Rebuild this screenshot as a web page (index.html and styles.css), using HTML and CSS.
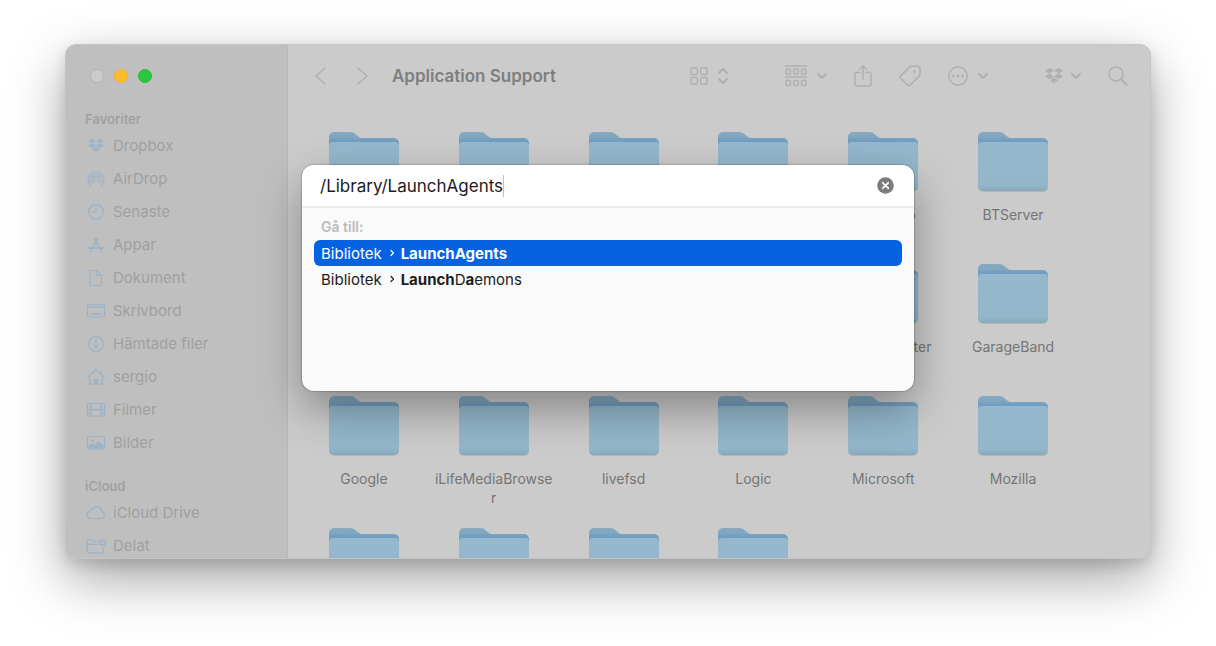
FILE: index.html
```html
<!DOCTYPE html>
<html lang="sv">
<head>
<meta charset="utf-8">
<title>Application Support</title>
<link rel="stylesheet" href="styles.css">
</head>
<body>
<svg class="sprite" aria-hidden="true">
  <defs>
    <linearGradient id="front" x1="0" y1="0" x2="0" y2="1">
      <stop offset="0" stop-color="#95b8cd"/><stop offset=".88" stop-color="#94b6ca"/><stop offset="1" stop-color="#87a9bb"/>
    </linearGradient>
    <linearGradient id="back" x1="0" y1="0" x2="0" y2="1">
      <stop offset="0" stop-color="#85aac1"/><stop offset=".1" stop-color="#80a6c0"/><stop offset=".15" stop-color="#729ec1"/><stop offset="1" stop-color="#729ec1"/>
    </linearGradient>
    <symbol id="folder" viewBox="0 0 70 60">
      <path d="M0 5a5 5 0 0 1 5-5h16c2.500 0 4 .8 5.500 2.200l2.500 2C30.500 5.500 31.500 6 34 6h31a5 5 0 0 1 5 5v43H0z" fill="url(#back)"/>
      <path d="M0 15v40a5 5 0 0 0 5 5h60a5 5 0 0 0 5-5V15z" fill="#b2b7ba"/>
      <path d="M0 14a4 4 0 0 1 4-4h62a4 4 0 0 1 4 4v40a5 5 0 0 1-5 5H5a5 5 0 0 1-5-5z" fill="url(#front)"/>
    </symbol>
    <symbol id="dropbox" viewBox="0 0 18 16">
      <path d="M4.500 0 9 2.800 4.500 5.600 0 2.800zM13.500 0 18 2.800 13.500 5.600 9 2.800zM4.500 5.600 9 8.400 4.500 11.200 0 8.400zM13.500 5.600 18 8.400 13.500 11.200 9 8.400zM9 9.600l4 2.600L9 15.400l-4-3.200z" fill="currentColor"/>
    </symbol>
    <symbol id="chevron" viewBox="0 0 10 10"><path d="M1 3l4 4 4-4"/></symbol>
  </defs>
</svg>

<main class="window">
  <nav class="sidebar" aria-label="Sidofält">
    <div class="lights">
      <button class="light" aria-label="Stäng"></button>
      <button class="light light-min" aria-label="Minimera"></button>
      <button class="light light-max" aria-label="Zooma"></button>
    </div>
    <h2 class="group-title">Favoriter</h2>
    <ul class="places">
      <li><a class="place" href="#dropbox"><svg class="place-icon" viewBox="0 0 22 18"><use href="#dropbox" x="3" y="1" width="16" height="15"/></svg>Dropbox</a></li>
      <li><a class="place" href="#airdrop"><svg class="place-icon" viewBox="0 0 22 18"><path d="M6 15.500A8 8 0 1 1 16 15.500M7.600 13.300a5.500 5.500 0 1 1 6.800 0M9 11.300a3 3 0 1 1 4 0"/><circle cx="11" cy="9.500" r="1" fill="currentColor" stroke="none"/></svg>AirDrop</a></li>
      <li><a class="place" href="#senaste"><svg class="place-icon" viewBox="0 0 22 18"><circle cx="11" cy="9" r="7.400"/><path d="M11 4.500V9H7"/></svg>Senaste</a></li>
      <li><a class="place" href="#appar"><svg class="place-icon" viewBox="0 0 22 18"><path d="M9.500 2.500 15.500 13.500M12.500 2.500 7.500 11.500M6.300 13.800l-.8 1.400M3.500 11.800h9.500M15.200 11.800h3.300M15.800 14l.8 1.300" stroke-width="1.700"/></svg>Appar</a></li>
      <li><a class="place" href="#dokument"><svg class="place-icon" viewBox="0 0 22 18"><path d="M6.500 1.500h5l5 5v8.500a1.500 1.500 0 0 1-1.500 1.500H6.500A1.500 1.500 0 0 1 5 15V3a1.500 1.500 0 0 1 1.500-1.500zM11.300 1.500V5.500a1 1 0 0 0 1 1h4"/></svg>Dokument</a></li>
      <li><a class="place" href="#skrivbord"><svg class="place-icon" viewBox="0 0 22 18"><rect x="2.500" y="2.500" width="17" height="12.500" rx="1.500"/><path d="M2.500 5h17M5.500 12h11" stroke-width="1.500"/></svg>Skrivbord</a></li>
      <li><a class="place" href="#hamtade"><svg class="place-icon" viewBox="0 0 22 18"><circle cx="11" cy="9" r="7.400"/><path d="M11 5v7.500M8 9.800l3 3 3-3"/></svg>Hämtade filer</a></li>
      <li><a class="place" href="#sergio"><svg class="place-icon" viewBox="0 0 22 18"><path d="M2.500 9.200 11 1.500l8.500 7.700M4.500 8v8h13V8M16.500 5.500V3"/><path d="M8.800 16v-5h4.400v5z" fill="currentColor" stroke="none"/></svg>sergio</a></li>
      <li><a class="place" href="#filmer"><svg class="place-icon" viewBox="0 0 22 18"><rect x="2.500" y="2.500" width="17" height="12.500" rx="1"/><path d="M6.300 2.500V15M15.700 2.500V15M6.300 8.700h9.400M2.500 5.500h3.800M2.500 8.700h3.800M2.500 11.800h3.800M15.700 5.500h3.800M15.700 8.700h3.800M15.700 11.800h3.800"/></svg>Filmer</a></li>
      <li><a class="place" href="#bilder"><svg class="place-icon" viewBox="0 0 22 18"><rect x="2.500" y="2.500" width="17" height="12.500" rx="1.500"/><circle cx="7.500" cy="6.500" r="1.400" fill="currentColor" stroke="none"/><path d="M3 14.500V12l4-3 2.500 2 4-4 6 5.200v2.300z" fill="currentColor" stroke="none"/></svg>Bilder</a></li>
    </ul>
    <h2 class="group-title group-next">iCloud</h2>
    <ul class="places">
      <li><a class="place" href="#drive"><svg class="place-icon" viewBox="0 0 22 18"><path d="M6 14.500a3.500 3.500 0 0 1-.8-7A2.500 2.500 0 0 1 8 4.700a4.500 4.500 0 0 1 8.300 2.300A3.800 3.800 0 0 1 16 14.500z"/></svg>iCloud Drive</a></li>
      <li><a class="place" href="#delat"><svg class="place-icon" viewBox="0 0 22 18"><path d="M13 4.500H9.500L8 3H4a1.800 1.800 0 0 0-1.800 1.800V14a1.800 1.800 0 0 0 1.800 1.800h12.500a1.800 1.800 0 0 0 1.800-1.800v-3M2.200 7.300h11"/><circle cx="17.500" cy="5.500" r="3"/><circle cx="17.500" cy="4.800" r="1" fill="currentColor" stroke="none"/><path d="M15.700 7.300h3.600"/></svg>Delat</a></li>
    </ul>
  </nav>

  <section class="content">
    <header class="toolbar">
      <button class="tool" aria-label="Bakåt"><svg width="12" height="18" viewBox="0 0 12 18"><path d="M11 1 2 9l9 8"/></svg></button>
      <button class="tool tool-forward" aria-label="Framåt"><svg width="12" height="18" viewBox="0 0 12 18"><path d="M1 1l9 8-9 8"/></svg></button>
      <h1 class="title">Application Support</h1>
      <div class="tool-groups">
        <button class="tool" aria-label="Visning"><svg width="18" height="18" viewBox="0 0 18 18"><rect x=".8" y=".8" width="6.600" height="6.600" rx="1.500"/><rect x="10.600" y=".8" width="6.600" height="6.600" rx="1.500"/><rect x=".8" y="10.600" width="6.600" height="6.600" rx="1.500"/><rect x="10.600" y="10.600" width="6.600" height="6.600" rx="1.500"/></svg><svg class="bold" width="10" height="18" viewBox="0 0 10 18"><path d="M1 6l4-4 4 4M1 12l4 4 4-4"/></svg></button>
        <div class="tool-group">
          <button class="tool" aria-label="Gruppera"><svg width="22" height="22" viewBox="0 0 22 22"><path d="M.5 1h21M.5 12h21"/><rect x="1" y="4" width="4.500" height="5" rx="1"/><rect x="8.800" y="4" width="4.500" height="5" rx="1"/><rect x="16.500" y="4" width="4.500" height="5" rx="1"/><rect x="1" y="15.500" width="4.500" height="5" rx="1"/><rect x="8.800" y="15.500" width="4.500" height="5" rx="1"/><rect x="16.500" y="15.500" width="4.500" height="5" rx="1"/></svg><svg class="bold" width="10" height="10"><use href="#chevron"/></svg></button>
          <button class="tool" aria-label="Dela"><svg width="18" height="22" viewBox="0 0 18 22"><path d="M6 7.500H3A2 2 0 0 0 1 9.500V19a2 2 0 0 0 2 2h12a2 2 0 0 0 2-2V9.500a2 2 0 0 0-2-2h-3M9 14V1M5.500 4.300 9 1l3.500 3.300"/></svg></button>
          <button class="tool" aria-label="Taggar"><svg width="22" height="22" viewBox="0 0 22 22"><path d="M12.500 1.200h5.500a3 3 0 0 1 3 3V9c0 .8-.3 1.500-.9 2.100l-9.300 9.200a1.500 1.500 0 0 1-2.100 0l-7.200-7a1.500 1.500 0 0 1 0-2.200l9-9A3 3 0 0 1 12.500 1.200z"/><circle cx="15.500" cy="6.600" r="1.300" fill="currentColor" stroke="none"/></svg></button>
          <button class="tool" aria-label="Åtgärder"><svg width="20" height="20" viewBox="0 0 20 20"><circle cx="10" cy="10" r="9.200"/><g fill="currentColor" stroke="none"><circle cx="5.500" cy="10" r="1.400"/><circle cx="10" cy="10" r="1.400"/><circle cx="14.500" cy="10" r="1.400"/></g></svg><svg class="bold" width="10" height="10"><use href="#chevron"/></svg></button>
        </div>
        <div class="tool-group">
          <button class="tool tool-tight" aria-label="Dropbox"><svg width="18" height="16"><use href="#dropbox"/></svg><svg class="bold" width="10" height="10"><use href="#chevron"/></svg></button>
          <button class="tool" aria-label="Sök"><svg width="20" height="20" viewBox="0 0 20 20"><circle cx="8" cy="8" r="7"/><path d="M13.200 13.200l5.300 5.300" stroke-width="2.200"/></svg></button>
        </div>
      </div>
    </header>

    <ul class="files">
      <li class="file"><svg class="folder"><use href="#folder"/></svg></li>
      <li class="file"><svg class="folder"><use href="#folder"/></svg></li>
      <li class="file"><svg class="folder"><use href="#folder"/></svg></li>
      <li class="file"><svg class="folder"><use href="#folder"/></svg></li>
      <li class="file"><svg class="folder"><use href="#folder"/></svg><span class="name">Audio Pro</span></li>
      <li class="file"><svg class="folder"><use href="#folder"/></svg><span class="name">BTServer</span></li>
      <li class="file"><svg class="folder"><use href="#folder"/></svg></li>
      <li class="file"><svg class="folder"><use href="#folder"/></svg></li>
      <li class="file"><svg class="folder"><use href="#folder"/></svg></li>
      <li class="file"><svg class="folder"><use href="#folder"/></svg></li>
      <li class="file"><svg class="folder"><use href="#folder"/></svg><span class="name">CrashReporter</span></li>
      <li class="file"><svg class="folder"><use href="#folder"/></svg><span class="name">GarageBand</span></li>
      <li class="file"><svg class="folder"><use href="#folder"/></svg><span class="name">Google</span></li>
      <li class="file"><svg class="folder"><use href="#folder"/></svg><span class="name">iLifeMediaBrowser</span></li>
      <li class="file"><svg class="folder"><use href="#folder"/></svg><span class="name">livefsd</span></li>
      <li class="file"><svg class="folder"><use href="#folder"/></svg><span class="name">Logic</span></li>
      <li class="file"><svg class="folder"><use href="#folder"/></svg><span class="name">Microsoft</span></li>
      <li class="file"><svg class="folder"><use href="#folder"/></svg><span class="name">Mozilla</span></li>
      <li class="file"><svg class="folder"><use href="#folder"/></svg></li>
      <li class="file"><svg class="folder"><use href="#folder"/></svg></li>
      <li class="file"><svg class="folder"><use href="#folder"/></svg></li>
      <li class="file"><svg class="folder"><use href="#folder"/></svg></li>
    </ul>
  </section>

  <form class="goto" role="dialog" aria-label="Gå till mapp">
    <div class="goto-bar">
      <input class="goto-input" type="text" aria-label="Sökväg" value="/Library/LaunchAgents">
      <button class="clear" type="button" aria-label="Rensa"><svg width="17" height="17" viewBox="0 0 17 17"><circle cx="8.500" cy="8.500" r="8.300" fill="#7c7c7c" stroke="none"/><path d="M5.800 5.800l5.400 5.400M11.200 5.800l-5.400 5.400" stroke="#fff" stroke-width="1.800"/></svg></button>
    </div>
    <div class="results">
      <h2 class="results-title">Gå till:</h2>
      <ul class="results-list">
        <li><a class="result result-on" href="#agents">Bibliotek<svg class="sep" viewBox="0 0 5 8"><path d="M1 1.500l2.500 2.500L1 6.500"/></svg><span><b>LaunchAgents</b></span></a></li>
        <li><a class="result" href="#daemons">Bibliotek<svg class="sep" viewBox="0 0 5 8"><path d="M1 1.500l2.500 2.500L1 6.500"/></svg><span><b>Launch</b>D<b>a</b>emons</span></a></li>
      </ul>
    </div>
  </form>
</main>
</body>
</html>
```

FILE: styles.css
```css
* { box-sizing: border-box; }

body {
  margin: 0;
  padding: 44px 65px 87px;
  height: 100vh;
  overflow: hidden;
  background: #fff;
  font-family: Inter, "Liberation Sans", sans-serif;
}

ul { list-style: none; margin: 0; padding: 0; }
h1, h2 { margin: 0; }
a { color: inherit; text-decoration: none; }
button { border: 0; padding: 0; background: none; color: inherit; }
svg { display: block; fill: none; stroke: currentColor; stroke-linecap: round; stroke-linejoin: round; flex: none; }
use, symbol { stroke: inherit; }
.sprite { position: absolute; width: 0; height: 0; }

.window {
  position: relative;
  display: flex;
  height: 100%;
  border: 1px solid #c4c5c9;
  border-radius: 11px;
  background: #cbcbcb;
  box-shadow: 0 6px 14px rgba(0, 0, 0, .12), 0 20px 54px rgba(0, 0, 0, .36);
}

.sidebar {
  flex: none;
  width: 222px;
  padding-left: 19px;
  overflow: hidden;
  border-radius: 10px 0 0 10px;
  border-right: 1px solid #b8b8b8;
  background: #bfbfbf;
}

.lights { display: flex; align-items: center; gap: 10px; height: 61px; padding-left: 5px; }
.light { width: 14px; height: 14px; border-radius: 50%; background: #cbcbcb; border: 1px solid #b3b3b3; }
.light-min { background: #fdbc2f; border-color: #f2b32c; }
.light-max { background: #29c73f; border-color: #28bc3c; }

.group-title { margin-top: 4px; font-size: 13px; line-height: 18px; font-weight: 600; color: #a1a1a1; }
.places { padding-top: 1px; }
.group-next { margin-top: 18px; }
.place { display: flex; align-items: center; gap: 6px; height: 33px; font-size: 15px; color: #9f9f9f; white-space: nowrap; }
.place-icon { width: 22px; height: 18px; color: #9cb2c6; stroke-width: 1.2; }
.place-icon use { stroke: none; }

.content { flex: 1; min-width: 0; display: flex; flex-direction: column; overflow: hidden; border-radius: 0 10px 10px 0; }

.toolbar { display: flex; flex: none; align-items: center; height: 61px; padding: 0 22px 0 26px; color: #b0b0b0; }
.tool { display: flex; align-items: center; gap: 10px; stroke-width: 1.5; }
.tool-tight { gap: 8px; }
.tool use[href="#dropbox"] { stroke: none; }
.bold { stroke-width: 2; }
.tool-forward { margin-left: 31px; }
.title { margin-left: 23px; font-size: 17px; font-weight: 600; color: #7f7f7f; white-space: nowrap; }
.tool-groups { display: flex; align-items: center; gap: 57px; margin-left: auto; }
.tool-group { display: flex; align-items: center; gap: 27px; }

.files { display: grid; grid-template-columns: repeat(6, 1fr); grid-auto-rows: 132px; padding: 26px 72px 0 11px; }
.file { display: flex; flex-direction: column; align-items: center; gap: 13px; }
.folder { width: 70px; height: 60px; stroke: none; }
.name { max-width: 120px; font-size: 14px; line-height: 19px; color: #757575; text-align: center; overflow-wrap: anywhere; }

.goto {
  position: absolute;
  top: 120px;
  left: 236px;
  right: 236px;
  overflow: hidden;
  border-radius: 12px;
  background: #fafafa;
  box-shadow: 0 0 1px 1px rgba(0, 0, 0, .16), 0 18px 44px rgba(0, 0, 0, .34);
}
.goto-bar { display: flex; align-items: center; justify-content: space-between; height: 43px; padding: 0 20px 0 18px; border-bottom: 2px solid #ebebeb; background: #fff; }
.goto-input { field-sizing: content; height: 22px; padding: 0; border: 0; border-right: 1px solid #b4c4d4; outline: 0; font-family: inherit; font-size: 17px; color: #1c1c1c; background: none; }
.results { min-height: 183px; padding: 10px 12px 0; }
.results-title { padding-left: 7px; font-size: 14px; line-height: 18px; font-weight: 600; color: #bcbcbc; }
.results-list { padding-top: 4px; }
.result { display: flex; align-items: center; height: 26px; padding: 0 7px; border-radius: 6px; font-size: 15px; color: #1c1c1c; }
.result-on { background: #0563e2; color: #fff; }
.result b { font-weight: 700; }
.sep { width: 5px; height: 8px; margin: 0 6px 0 8px; stroke-width: 1.2; }
```
